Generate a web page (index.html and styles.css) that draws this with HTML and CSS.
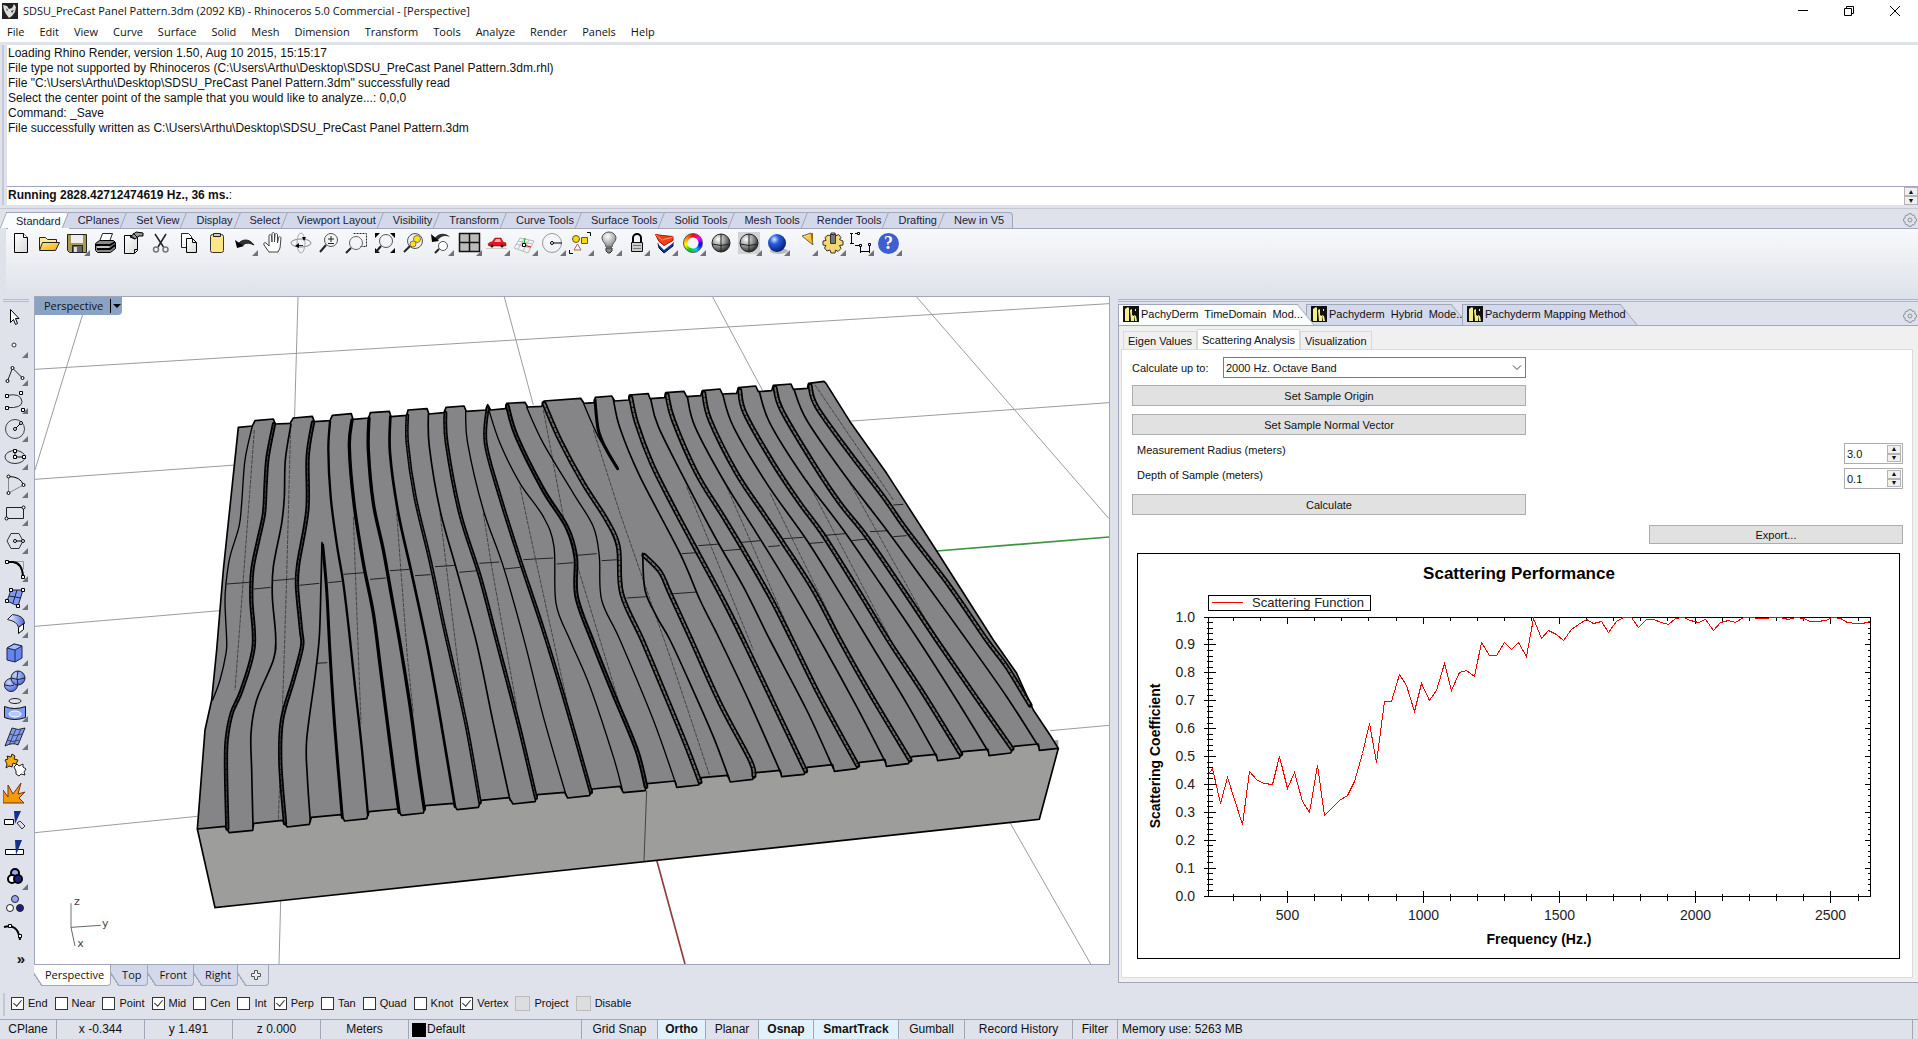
FILE: index.html
```html
<!DOCTYPE html>
<html lang="en">
<head>
<meta charset="utf-8">
<title>SDSU_PreCast Panel Pattern.3dm - Rhinoceros 5.0 Commercial</title>
<link rel="stylesheet" href="styles.css">
</head>
<body>
<svg class="defs" width="0" height="0" aria-hidden="true">
  <defs>
    <linearGradient id="gold" x1="0" y1="0" x2="1" y2="1"><stop offset="0" stop-color="#ffe98a"/><stop offset="1" stop-color="#f5a800"/></linearGradient>
    <linearGradient id="paper" x1="0" y1="0" x2="1" y2="1"><stop offset="0" stop-color="#fff"/><stop offset="1" stop-color="#d8d8d8"/></linearGradient>
    <radialGradient id="ballGray" cx=".35" cy=".3" r=".75"><stop offset="0" stop-color="#fff"/><stop offset=".5" stop-color="#999"/><stop offset="1" stop-color="#222"/></radialGradient>
    <radialGradient id="bulb" cx=".4" cy=".3" r=".8"><stop offset="0" stop-color="#fff"/><stop offset="1" stop-color="#777"/></radialGradient>
    <radialGradient id="ballBlue" cx=".35" cy=".3" r=".75"><stop offset="0" stop-color="#dfe9ff"/><stop offset=".35" stop-color="#2a5ee0"/><stop offset="1" stop-color="#001a70"/></radialGradient>
    <radialGradient id="ballSky" cx=".35" cy=".3" r=".8"><stop offset="0" stop-color="#c9d6ff"/><stop offset="1" stop-color="#3f62d8"/></radialGradient>
    <linearGradient id="arcFade" x1="0" y1="0" x2="1" y2="0"><stop offset="0" stop-color="#fff"/><stop offset="1" stop-color="#4a68e0"/></linearGradient>
    <symbol id="pachy" viewBox="0 0 16 16"><path d="M0 0h16v16H0z" fill="#111"/><path d="M2 3l3-2 1 1v13H2zM7 4l2-1v6l2 1v5H8zM11 9l2 1 1 5h-2zM12 3h1v2h-1z" fill="#f4ef86"/></symbol>
    <symbol id="gear" viewBox="0 0 16 16"><path d="M8 1.500l1.500.3.6 1.500 1.700-.3 1.200 1.200-.3 1.700 1.500.6.300 1.500-.3 1.500-1.500.6.3 1.700-1.200 1.200-1.700-.3-.6 1.500L8 14.500l-1.500-.3-.6-1.500-1.700.3L3 11.800l.3-1.700-1.500-.6L1.500 8l.3-1.500 1.500-.6L3 4.200 4.200 3l1.700.3.6-1.500z" fill="none" stroke="#8c929c"/><circle cx="8" cy="8" r="2" fill="none" stroke="#8c929c"/></symbol>
  </defs>
</svg>

<header class="titlebar">
  <svg class="app-icon" viewBox="0 0 16 16" aria-hidden="true"><path d="M0 0h16v16H0z" fill="#222"/><path d="M1 2l4 1 2 3 3-1 2-4 2 3-1 5-3 4-3 2-3-4-2-4z" fill="#ddd"/><path d="M4 5l2 2-1 1zM9 8l3-1-2 3z" fill="#333"/></svg>
  <h1 class="title">SDSU_PreCast Panel Pattern.3dm (2092 KB) - Rhinoceros 5.0 Commercial - [Perspective]</h1>
  <div class="window-buttons">
    <button type="button" aria-label="Minimize"><svg viewBox="0 0 12 12"><path d="M1 5.500h10" stroke="#000" fill="none"/></svg></button>
    <button type="button" aria-label="Restore"><svg viewBox="0 0 12 12"><path d="M1.500 3.500h7v7h-7zM3.500 3.500v-2h7v7h-2" stroke="#000" fill="none"/></svg></button>
    <button type="button" aria-label="Close"><svg viewBox="0 0 12 12"><path d="M1 1l10 10M11 1L1 11" stroke="#000" fill="none"/></svg></button>
  </div>
</header>

<nav class="menubar">
  <a href="#">File</a><a href="#">Edit</a><a href="#">View</a><a href="#">Curve</a><a href="#">Surface</a><a href="#">Solid</a><a href="#">Mesh</a><a href="#">Dimension</a><a href="#">Transform</a><a href="#">Tools</a><a href="#">Analyze</a><a href="#">Render</a><a href="#">Panels</a><a href="#">Help</a>
</nav>

<section class="command">
  <div class="history">
    <p>Loading Rhino Render, version 1.50, Aug 10 2015, 15:15:17</p>
    <p>File type not supported by Rhinoceros (C:\Users\Arthu\Desktop\SDSU_PreCast Panel Pattern.3dm.rhl)</p>
    <p>File "C:\Users\Arthu\Desktop\SDSU_PreCast Panel Pattern.3dm" successfully read</p>
    <p>Select the center point of the sample that you would like to analyze...: 0,0,0</p>
    <p>Command: _Save</p>
    <p>File successfully written as C:\Users\Arthu\Desktop\SDSU_PreCast Panel Pattern.3dm</p>
  </div>
  <div class="prompt">
    <p><b>Running 2828.42712474619 Hz., 36 ms.</b>:</p>
    <div class="stepper"><button type="button" aria-label="Previous command">▲</button><button type="button" aria-label="Next command">▼</button></div>
  </div>
</section>

<section class="toolbars">
  <div class="tab-row">
    <div class="tool-tabs">
      <button type="button" class="tab active">Standard</button><button type="button" class="tab">CPlanes</button><button type="button" class="tab">Set View</button><button type="button" class="tab">Display</button><button type="button" class="tab">Select</button><button type="button" class="tab">Viewport Layout</button><button type="button" class="tab">Visibility</button><button type="button" class="tab">Transform</button><button type="button" class="tab">Curve Tools</button><button type="button" class="tab">Surface Tools</button><button type="button" class="tab">Solid Tools</button><button type="button" class="tab">Mesh Tools</button><button type="button" class="tab">Render Tools</button><button type="button" class="tab">Drafting</button><button type="button" class="tab">New in V5</button>
    </div>
    <svg class="gear"><use href="#gear"/></svg>
  </div>
  <div class="tools">
    <button type="button" class="tool" aria-label="New"><svg viewBox="0 0 24 24"><path d="M5.500 2.500h9l4 4v15h-13z" fill="url(#paper)" stroke="#000"/><path d="M14.500 2.500v4h4" fill="#fff" stroke="#000"/></svg></button>
    <button type="button" class="tool" aria-label="Open"><svg viewBox="0 0 24 24"><path d="M2.500 18.500v-12h6l2 2h9v3" fill="#ffe9a0" stroke="#222"/><path d="M2.500 19.500l3-8h17l-4 8z" fill="url(#gold)" stroke="#222"/></svg></button>
    <button type="button" class="tool fly" aria-label="Save"><svg viewBox="0 0 24 24"><path d="M2.500 3.500h19v18h-17l-2-2z" fill="#a89a50" stroke="#222"/><path d="M6 4h12v8H6z" fill="#eee"/><path d="M7.500 14.500h10v7h-10z" fill="#666" stroke="#222"/><path d="M9 16h3v5H9z" fill="#ddd"/></svg></button>
    <button type="button" class="tool" aria-label="Print"><svg viewBox="0 0 24 24"><path d="M6.500 10.500l3-8h10l-3 8z" fill="#fff" stroke="#222"/><path d="M2.500 12.500l4-3h14l2 2v6l-5 4h-13l-2-2z" fill="#888" stroke="#000"/><path d="M3 14h14l5-3M4 18h13l5-4" stroke="#000" fill="none" stroke-width="2"/><path d="M4 16h12" stroke="#fff"/></svg></button>
    <button type="button" class="tool" aria-label="Document properties"><svg viewBox="0 0 24 24"><path d="M3.500 4.500h13v15l-3 3h-10z" fill="url(#paper)" stroke="#000"/><path d="M13.500 22v-3.500h3" fill="none" stroke="#000"/><path d="M9 6l6-5 7 1v3h-4l-4 3z" fill="#999" stroke="#000"/><path d="M9 4l5 4M12 2l4 4" stroke="#000"/></svg></button>
    <button type="button" class="tool" aria-label="Cut"><svg viewBox="0 0 24 24"><path d="M6 3l8.500 13M17 3L9 16" stroke="#222" stroke-width="1.500"/><circle cx="7" cy="18.500" r="2.500" fill="none" stroke="#777" stroke-width="1.500"/><circle cx="16.500" cy="18.500" r="2.500" fill="none" stroke="#777" stroke-width="1.500"/></svg></button>
    <button type="button" class="tool" aria-label="Copy"><svg viewBox="0 0 24 24"><path d="M4.500 2.500h7l3 3v11h-10z" fill="#fff" stroke="#222"/><path d="M9.500 7.500h6l4 4v10h-10z" fill="url(#paper)" stroke="#000"/><path d="M15.500 7.500v4h4" fill="none" stroke="#000"/></svg></button>
    <button type="button" class="tool" aria-label="Paste"><svg viewBox="0 0 24 24"><rect x="5.500" y="3.500" width="13" height="18" rx="2" fill="#fbe784" stroke="#333"/><path d="M8.500 5.500v-3h7v3z" fill="#ccc" stroke="#222"/></svg></button>
    <button type="button" class="tool fly" aria-label="Undo"><svg viewBox="0 0 24 24"><path d="M5 13c4-5 11-6 16 1-6-3-9-2-12 1z" fill="#333" stroke="#222"/><path d="M2 9l2 8 7-2z" fill="#000"/></svg></button>
    <button type="button" class="tool" aria-label="Pan"><svg viewBox="0 0 24 24"><path d="M8 21l-5-7c-1-2 1-3 2-2l3 3V5c0-2 2-2 2.500 0l.5 6V3c0-2 2.500-2 2.500 0v8l.5-7c0-2 2.500-2 2.500 0v8l1-5c0-2 2.500-1.500 2.500 0l-1 10-2 4z" fill="#fff" stroke="#444"/></svg></button>
    <button type="button" class="tool" aria-label="Rotate view"><svg viewBox="0 0 24 24"><ellipse cx="12" cy="12" rx="10" ry="4" fill="none" stroke="#888"/><ellipse cx="12" cy="12" rx="4" ry="10" fill="none" stroke="#aaa"/><path d="M6 15l4-3v5zM15 10l-2-4h4z" fill="#000"/><path d="M10 14.500h4" stroke="#222"/></svg></button>
    <button type="button" class="tool" aria-label="Zoom dynamic"><svg viewBox="0 0 24 24"><circle cx="14" cy="9" r="6.500" fill="#f4f4f4" stroke="#555"/><path d="M9 14l-6 7" stroke="#222" stroke-width="2"/><path d="M11 8h6M14 5v6M11 12.500h6" stroke="#222"/></svg></button>
    <button type="button" class="tool" aria-label="Zoom window"><svg viewBox="0 0 24 24"><path d="M8.500 2.500h13v13h-6" fill="none" stroke="#222" stroke-dasharray="2 1"/><circle cx="11" cy="12" r="6.500" fill="none" stroke="#666"/><path d="M6 17l-5 5" stroke="#222" stroke-width="2"/></svg></button>
    <button type="button" class="tool" aria-label="Zoom extents"><svg viewBox="0 0 24 24"><path d="M2 2h5L2 7zM22 2v5l-5-5zM22 22h-5l5-5zM2 22v-5l5 5z" fill="#000"/><circle cx="13" cy="10" r="6.500" fill="none" stroke="#555"/><path d="M8 15l-5 6" stroke="#222" stroke-width="2"/></svg></button>
    <button type="button" class="tool" aria-label="Zoom selected"><svg viewBox="0 0 24 24"><circle cx="14" cy="10" r="7.500" fill="#eee" stroke="#555"/><circle cx="16" cy="8" r="3.500" fill="#ffe600" stroke="#777"/><circle cx="12" cy="13" r="3" fill="#ffe600" stroke="#777"/><path d="M9 15l-6 6" stroke="#222" stroke-width="2"/></svg></button>
    <button type="button" class="tool fly" aria-label="Undo view"><svg viewBox="0 0 24 24"><path d="M5 8c4-6 11-7 16-2-5-2-9-1-12 3z" fill="#333"/><path d="M2 3l1 8 7-1z"/><circle cx="14" cy="15" r="4.500" fill="#fff" stroke="#555"/><path d="M10 18l-4 4" stroke="#222" stroke-width="2"/></svg></button>
    <button type="button" class="tool fly" aria-label="Four viewports"><svg viewBox="0 0 24 24"><path d="M2.500 2.500h20v18h-20z" fill="#bbb" stroke="#111" stroke-width="1.500"/><path d="M12.500 2.500v18M2.500 11.500h20" stroke="#111" stroke-width="1.500"/></svg></button>
    <button type="button" class="tool fly" aria-label="Set view"><svg viewBox="0 0 24 24"><path d="M3 14c0-2 2-3 4-3l3-4h6l2 4 3 1v3H4z" fill="#e01520" stroke="#800" stroke-width=".5"/><path d="M11 8h4l1 3H9z" fill="#f6b0b0"/><circle cx="7" cy="15" r="1.500" fill="#222"/><circle cx="17" cy="15" r="1.500" fill="#222"/><path d="M1 17.500h21" stroke="#ccc"/></svg></button>
    <button type="button" class="tool fly" aria-label="Construction plane"><svg viewBox="0 0 24 24"><path d="M7 7l14 3-6 12-14-5zM5 10l14 3M3 13l14 4M11 8L5 18M16 9l-6 11" fill="none" stroke="#bbb"/><path d="M11 14l1-7" stroke="#0a0"/><path d="M11 14l7 2" stroke="#c00"/><path d="M9.500 12.500h3v3h-3z" fill="#fff" stroke="#000"/></svg></button>
    <button type="button" class="tool fly" aria-label="Object snap"><svg viewBox="0 0 24 24"><circle cx="11" cy="12" r="9.500" fill="none" stroke="#999"/><path d="M12 12h9" stroke="#000"/><circle cx="11" cy="12" r="1.500" fill="#fff" stroke="#000"/></svg></button>
    <button type="button" class="tool fly" aria-label="Select"><svg viewBox="0 0 24 24"><circle cx="7" cy="8" r="3.500" fill="#ffd800" stroke="#555"/><path d="M12.500 6.500h6v6h-6z" fill="#ffd800" stroke="#555"/><path d="M5 19l3.500-6 3.500 6z" fill="#fff" stroke="#a64"/><path d="M18 1.500h3.500V5M.5 19v3.500H4" fill="none" stroke="#000"/></svg></button>
    <button type="button" class="tool fly" aria-label="Hide objects"><svg viewBox="0 0 24 24"><path d="M9 16c0-4-4-5-4-9a7 6 0 0 1 14 0c0 4-4 5-4 9z" fill="url(#bulb)" stroke="#555"/><path d="M9 17h6v3l-2 2h-2l-2-2z" fill="#888" stroke="#333"/></svg></button>
    <button type="button" class="tool fly" aria-label="Lock objects"><svg viewBox="0 0 24 24"><path d="M8 11V7a4 4 0 0 1 8 0v4" fill="none" stroke="#000" stroke-width="2"/><path d="M6.500 11.500h11v9h-11z" fill="#ccc" stroke="#111"/><path d="M8 14.500h8M8 17.500h8" stroke="#777"/></svg></button>
    <button type="button" class="tool fly" aria-label="Layers"><svg viewBox="0 0 24 24"><path d="M5 12l15-1v4l-9 7-5-5z" fill="#12309a" stroke="#001050"/><path d="M4 9l16-1v4l-9 7-5-5z" fill="#fff"/><path d="M2.500 3.500l7 1 10.500 1v4l-9 5-5-4z" fill="#f0401a" stroke="#b01000"/><path d="M3 4l6 5 11-3" fill="none" stroke="#ff9a60"/></svg></button>
    <button type="button" class="tool fly color-wheel" aria-label="Object properties"><i></i></button>
    <button type="button" class="tool" aria-label="Shade"><svg viewBox="0 0 24 24"><circle cx="12" cy="12" r="9" fill="url(#ballGray)" stroke="#222"/><path d="M12 3v18M3 13q9 3 18 0" fill="none" stroke="#222"/></svg></button>
    <button type="button" class="tool fly" aria-label="Shade selected"><svg viewBox="0 0 24 24"><path d="M1 1h22v22H1z" fill="#d0d2d6"/><circle cx="12" cy="12" r="9" fill="url(#ballGray)" stroke="#222"/><path d="M12 3v18M3 13q9 3 18 0" fill="none" stroke="#222"/></svg></button>
    <button type="button" class="tool fly" aria-label="Render"><svg viewBox="0 0 24 24"><ellipse cx="14" cy="20" rx="9" ry="3" fill="#bbb"/><circle cx="12" cy="12" r="9" fill="url(#ballBlue)"/></svg></button>
    <button type="button" class="tool fly" aria-label="Spotlight"><svg viewBox="0 0 24 24"><path d="M9 5l9-3 2 12z" fill="url(#gold)" stroke="#666"/><path d="M18 2h2v12z" fill="#a60"/></svg></button>
    <button type="button" class="tool fly" aria-label="Options"><svg viewBox="0 0 24 24"><path d="M10 2h4l.5 3 3-1.500 2.500 3-1.500 2 3.500 1.500v4l-3.500.5 1.500 3-3 3-2.500-1.500-.5 3h-4l-1-3-3 1-2.500-3 1.500-2.500L2 14v-4l3-.5-1-3L7 4l2.500 1z" fill="#f4d672" stroke="#333"/><path d="M9.500 3.500h5v9h-5z" fill="#777" stroke="#333"/></svg></button>
    <button type="button" class="tool fly" aria-label="Dimensions"><svg viewBox="0 0 24 24"><path d="M2.500 3v9M1 2.500h3M1 12.500h4M6 2.500h4M6 14.500h7M11.500 14v8M20.500 14v8M12 20.500h8" fill="none" stroke="#000"/><path d="M8.500 1.500h2v2h-2zM10.500 13.500h2v2h-2zM19.500 12.500h2v2h-2z" fill="#fff" stroke="#000"/></svg></button>
    <button type="button" class="tool fly help" aria-label="Help"><i>?</i></button>
  </div>
</section>

<main class="workspace">
  <aside class="sidebar">
    <button type="button" class="tool" aria-label="Select objects"><svg viewBox="0 0 24 24"><path d="M7.500 4.500v13l3-3 2 5 2-1-2-5h3.500z" fill="#fff" stroke="#000"/></svg></button>
    <button type="button" class="tool fly" aria-label="Point"><svg viewBox="0 0 24 24"><circle cx="11" cy="12" r="2" fill="#fff" stroke="#333"/></svg></button>
    <button type="button" class="tool fly" aria-label="Polyline"><svg viewBox="0 0 24 24"><path d="M4.500 20l5-13 10 10" fill="none" stroke="#222"/><g fill="#fff" stroke="#000"><circle cx="4.500" cy="20" r="1.500"/><circle cx="9.500" cy="7" r="1.500"/><circle cx="19.500" cy="17" r="1.500"/></g></svg></button>
    <button type="button" class="tool fly" aria-label="Curve"><svg viewBox="0 0 24 24"><path d="M4 6.500q14-3 15 6 0 7-15 6" fill="none" stroke="#333"/><path d="M2.500 5.500h3v3h-3zM16.500 2.500h3v3h-3zM2.500 17.500h3v3h-3zM18.500 19.500h3v3h-3z" fill="#fff" stroke="#000"/></svg></button>
    <button type="button" class="tool fly" aria-label="Circle"><svg viewBox="0 0 24 24"><circle cx="12" cy="12" r="9.500" fill="none" stroke="#444"/><path d="M12 12l6-6" stroke="#000"/><circle cx="12" cy="12" r="1.500" fill="#fff" stroke="#000"/><circle cx="18" cy="6" r="1.500" fill="#fff" stroke="#000"/></svg></button>
    <button type="button" class="tool fly" aria-label="Ellipse"><svg viewBox="0 0 24 24"><ellipse cx="12" cy="12" rx="10" ry="6.500" fill="none" stroke="#333"/><path d="M12 6v6h9" fill="none" stroke="#000"/><path d="M10.500 4.500h3v3h-3zM10.500 10.500h3v3h-3zM19.500 10.500h3v3h-3z" fill="#fff" stroke="#000"/></svg></button>
    <button type="button" class="tool fly" aria-label="Arc"><svg viewBox="0 0 24 24"><path d="M5.500 20V3.500" stroke="#888"/><path d="M5.500 20l15-8" stroke="#888"/><path d="M5.500 3.500q12 0 15 8.500" fill="none" stroke="#000"/><g fill="#fff" stroke="#000"><circle cx="5.500" cy="20" r="1.500"/><circle cx="5.500" cy="3.500" r="1.500"/><circle cx="20.500" cy="12" r="1.500"/></g></svg></button>
    <button type="button" class="tool fly" aria-label="Rectangle"><svg viewBox="0 0 24 24"><path d="M3.500 6.500h17v11h-17z" fill="none" stroke="#222"/><circle cx="3.500" cy="17.500" r="1.500" fill="#fff" stroke="#000"/><circle cx="20.500" cy="6.500" r="1.500" fill="#fff" stroke="#000"/></svg></button>
    <button type="button" class="tool fly" aria-label="Polygon"><svg viewBox="0 0 24 24"><path d="M4 12l4-7.500h8l4 7.500-4 7.500H8z" fill="none" stroke="#333"/><path d="M12 12h8" stroke="#000"/><circle cx="12" cy="12" r="1.500" fill="#fff" stroke="#000"/><circle cx="20" cy="12" r="1.500" fill="#fff" stroke="#000"/></svg></button>
    <button type="button" class="tool fly" aria-label="Fillet curves"><svg viewBox="0 0 24 24"><path d="M12 4.500h8.500v8" fill="none" stroke="#999"/><path d="M4 5h6q9 1 10 14" fill="none" stroke="#000" stroke-width="2"/><path d="M2.500 3.500h3v3h-3zM18.500 18.500h3v3h-3z" fill="#fff" stroke="#000"/></svg></button>
    <button type="button" class="tool fly" aria-label="Surface from points"><svg viewBox="0 0 24 24"><path d="M8 5h12l-5 16-11-5z" fill="#7f9af5" stroke="#223"/><path d="M14 5l-4 13M6 11l12 2" stroke="#223" fill="none"/><path d="M6.500 3.500h3v3h-3zM18.500 3.500h3v3h-3zM2.500 14.500h3v3h-3zM13.500 19.500h3v3h-3z" fill="#fff" stroke="#000"/></svg></button>
    <button type="button" class="tool fly" aria-label="Extrude surface"><svg viewBox="0 0 24 24"><path d="M4.500 6.500l5-5q12 1 12 9l-6 4q-1-6-11-8z" fill="url(#arcFade)" stroke="#222"/><path d="M15.500 14.500l5-4v6l-5 4z" fill="#fff" stroke="#000"/></svg></button>
    <button type="button" class="tool fly" aria-label="Box"><svg viewBox="0 0 24 24"><path d="M4 7l7-4 8 2v12l-7 4-8-2z" fill="#6684f0" stroke="#1a2550"/><path d="M4 7l8 2 7-4-8-2z" fill="#a9bcff" stroke="#1a2550"/><path d="M12 9v12" stroke="#1a2550"/></svg></button>
    <button type="button" class="tool fly" aria-label="Boolean union"><svg viewBox="0 0 24 24"><circle cx="8" cy="16" r="6.500" fill="url(#ballSky)" stroke="#223"/><circle cx="15" cy="9" r="7" fill="url(#ballSky)" stroke="#223"/><path d="M8 9q7 3 14 0M15 2q-2 7 0 14M2 16q6 2 9 0" fill="none" stroke="#223"/></svg></button>
    <button type="button" class="tool fly" aria-label="Project curve"><svg viewBox="0 0 24 24"><ellipse cx="12" cy="4" rx="6" ry="2.500" fill="none" stroke="#222"/><path d="M1.500 9.500q10 4 21 0v11q-11 4-21 0z" fill="#7f9cf5" stroke="#111"/><ellipse cx="12" cy="17" rx="6" ry="3" fill="#b9c9ff" stroke="#fff"/></svg></button>
    <button type="button" class="tool fly" aria-label="Mesh"><svg viewBox="0 0 24 24"><path d="M9 3q6 3 13 0l-7 17q-5-3-13 1z" fill="#7f9af5" stroke="#223"/><path d="M13 4L6 20M18 4l-7 15M6 9q6 3 13 0M4 15q6 3 12 0" fill="none" stroke="#445"/></svg></button>
    <button type="button" class="tool" aria-label="Join"><svg viewBox="0 0 24 24"><path d="M2 7l3-1-1-3 4 1 1-3 3 2-1 3 4 1-2 4-3-1-1 4-3-1-3 2 1-4z" fill="#ffa90a" stroke="#222"/><path d="M11 14l3-3 2 2 4-2 0 3 3 2-2 3 1 3-4-1-2 2-3-2 0-3z" fill="#fff" stroke="#222"/></svg></button>
    <button type="button" class="tool" aria-label="Explode"><svg viewBox="0 0 24 24"><path d="M0 9l5 7 0-12 5 9 8-11-3 11 7-2-6 6 5 5H0z" fill="#f49a05" stroke="#732"/></svg></button>
    <button type="button" class="tool" aria-label="Trim"><svg viewBox="0 0 24 24"><path d="M1.500 10.500h9v5h-9z" fill="#fff" stroke="#000"/><path d="M14 14l3-2 5 5-3 3z" fill="none" stroke="#333"/><path d="M11 2h7l-6 13z" fill="#14308c"/></svg></button>
    <button type="button" class="tool" aria-label="Split"><svg viewBox="0 0 24 24"><path d="M2.500 12.500h18v5h-18z" fill="#fff" stroke="#000"/><path d="M12 3h7l-6 15z" fill="#14308c"/></svg></button>
    <button type="button" class="tool fly" aria-label="Group"><svg viewBox="0 0 24 24"><g stroke="#000" stroke-width="2"><circle cx="12" cy="8" r="4" fill="#9aa6f0"/><circle cx="9" cy="14" r="4" fill="#fff"/><circle cx="15" cy="14" r="4" fill="#1c1f80"/></g></svg></button>
    <button type="button" class="tool" aria-label="Ungroup"><svg viewBox="0 0 24 24"><g stroke="#222"><circle cx="12" cy="6" r="3.500" fill="#9aa6f0"/><circle cx="7" cy="15" r="3.500" fill="#fff"/><circle cx="17" cy="15" r="3.500" fill="#1c1f80"/></g></svg></button>
    <button type="button" class="tool" aria-label="Edit points"><svg viewBox="0 0 24 24"><path d="M1 6q14-4 16 13" fill="none" stroke="#000" stroke-width="2"/><path d="M5.500 3.500h3v3h-3zM15.500 13.500h3v3h-3z" fill="#fff" stroke="#000"/></svg></button>
    <button type="button" class="tool more" aria-label="More tools">»</button>
  </aside>

  <section class="view">
    <div class="viewport">
      <svg id="scene" class="scene" viewBox="-465 -219 3222 2001" preserveAspectRatio="xMidYMid slice" role="img" aria-label="Perspective view of the precast panel">
        <g class="grid">
          <path d="M-465-2L2757-199M-465 328L2757 98M-465 769L90 722M-465 1388L22 1339M2580 1082L2757 1066M-306-219L-465 300M324-219L272 1595L267 1782M943-219L1030 105M1568-219L1718 62M2180-219L2757 446M2460 1358L2702 1782"/>
          <path class="axis-y" d="M2240 543L2757 501"/>
          <path class="axis-x" d="M1400 1470L1485 1782"/>
        </g>
        <g class="slab">
          <path class="front" d="M22 1360L2605 1110 2605 1135 2548 1348 75 1613 22 1377z"/>
          <path class="top" d="M145 172L187 168 195 152 250 147 256 162 300 160 310 144 367 139 373 155 420 152 427 136 484 131 489 148 536 144 541 128 598 124 603 140 650 136 654 120 711 116 717 132 762 128 768 112 822 108 829 124 888 120 893 104 902 120 946 116 950 100 1005 97 1013 111 1055 109 1062 93 1172 85 1182 100 1212 98 1216 82 1265 78 1274 93 1316 90 1318 75 1375 71 1380 86 1424 83 1427 68 1482 64 1490 80 1532 77 1537 62 1590 57 1597 72 1640 70 1645 53 1697 48 1705 65 1745 62 1750 46 1803 42 1810 58 1852 55 1856 40 1902 34 1908 40 1980 155 2090 310 2135 380 2240 543 2410 810 2480 910 2530 1020 2580 1095 2605 1135 2548 1141 2545 1122 2472 1129 2462 1149 2397 1157 2394 1138 2318 1145 2308 1164 2243 1172 2238 1153 2166 1160 2155 1181 2089 1189 2085 1169 2009 1177 1999 1196 1933 1204 1928 1184 1852 1192 1842 1213 1775 1220 1770 1201 1698 1208 1688 1228 1621 1236 1613 1216 1535 1223 1526 1245 1460 1252 1455 1233 1372 1241 1365 1262 1300 1268 1290 1249 1208 1257 1198 1277 1133 1284 1124 1267 1042 1274 1035 1295 969 1302 957 1283 873 1291 865 1312 801 1319 790 1300 706 1307 700 1329 634 1336 622 1317 537 1325 530 1346 464 1353 453 1334 364 1342 358 1363 292 1371 277 1351 191 1360 188 1381 118 1388 105 1369 22 1377 45 1080 65 990 80 840 100 600z"/>
          <path class="edge" d="M22 1377L75 1613 2548 1348 2605 1135"/>
          <path class="seam" d="M1370 1262L1362 1473"/>
        </g>
        <path class="iso" d="M110 642L177 637M192 657L242 652M248 632L317 626M328 646L388 640M415 638L455 634M460 613L522 608M540 628L588 624M600 602L658 598M675 617L722 614M735 590L797 586M808 607L862 602M868 580L928 576M942 597L990 592M1000 569L1090 564M1100 582L1150 578M1162 556L1220 551M1235 572L1285 569M1310 684L1370 680M1440 672L1520 666M1475 551L1520 548M1525 527L1590 522M1600 542L1650 538M1655 517L1710 512M1735 530L1770 527M1780 506L1840 502M1860 520L1900 517M1905 496L1965 491M1985 512L2030 507M2040 485L2095 482M2110 500L2150 497M2110 405L2140 403M380 880L412 878"/>
        <path class="iso dotted" d="M193 180L165 560 135 960M302 165L290 620 280 940 265 1350M490 440L505 850 513 1060M620 430L652 860 670 1030M750 430L800 850 825 1040M880 430L905 590 980 1010M990 350L1035 560 1130 990M1060 120L1120 440 1160 580 1300 1040M1210 180L1290 430 1440 860 1560 1220M1490 350L1690 840M1610 350L1850 900M1740 370L2000 900M1850 330L2150 900M1980 340L2280 880M1875 45L2110 390"/>
        <g id="ribs"></g>
        <g class="gizmo">
          <path class="z" d="M-357 1600V1672"/><path d="M-357 1672L-268 1666M-357 1672L-345 1728"/>
          <text x="-348" y="1604">z</text><text x="-264" y="1672">y</text><text x="-338" y="1730">x</text>
        </g>
      </svg>
      <button type="button" class="view-title"><span>Perspective</span><i></i></button>
    </div>
    <div class="view-tabs">
      <button type="button" class="vtab active">Perspective</button><button type="button" class="vtab">Top</button><button type="button" class="vtab">Front</button><button type="button" class="vtab">Right</button><button type="button" class="vtab add" aria-label="New viewport"><svg viewBox="0 0 10 10"><path d="M3.500.5h3v3h3v3h-3v3h-3v-3h-3v-3h3z" fill="#eee" stroke="#555"/></svg></button>
    </div>
  </section>

  <section class="panel">
    <div class="panel-tabs">
      <button type="button" class="ptab active"><svg><use href="#pachy"/></svg>PachyDerm&nbsp; TimeDomain&nbsp; Mod...</button>
      <button type="button" class="ptab"><svg><use href="#pachy"/></svg>Pachyderm&nbsp; Hybrid&nbsp; Mode...</button>
      <button type="button" class="ptab"><svg><use href="#pachy"/></svg>Pachyderm Mapping Method</button>
      <svg class="gear"><use href="#gear"/></svg>
    </div>
    <div class="panel-body">
      <div class="page-tabs">
        <button type="button">Eigen Values</button><button type="button" class="active">Scattering Analysis</button><button type="button">Visualization</button>
      </div>
      <div class="page">
        <div class="row">
          <label for="band">Calculate up to:</label>
          <span class="select"><select id="band"><option>2000 Hz. Octave Band</option></select><svg viewBox="0 0 10 6"><path d="M1 .5l4 4 4-4" fill="none" stroke="#444"/></svg></span>
        </div>
        <button type="button" class="btn">Set Sample Origin</button>
        <button type="button" class="btn">Set Sample Normal Vector</button>
        <div class="field"><label for="radius">Measurement Radius (meters)</label><span class="spin"><input id="radius" type="text" value="3.0"><span class="stepper"><button type="button" aria-label="Increase radius">▲</button><button type="button" aria-label="Decrease radius">▼</button></span></span></div>
        <div class="field"><label for="depth">Depth of Sample (meters)</label><span class="spin"><input id="depth" type="text" value="0.1"><span class="stepper"><button type="button" aria-label="Increase depth">▲</button><button type="button" aria-label="Decrease depth">▼</button></span></span></div>
        <button type="button" class="btn">Calculate</button>
        <button type="button" class="btn export">Export...</button>
        <div class="chart">
          <svg id="chart" viewBox="1 1 761 404" role="img" aria-label="Scattering Performance">
            <text class="chart-title" x="382" y="26">Scattering Performance</text>
            <rect class="line" x="71.500" y="42.500" width="162" height="15"/>
            <path class="series" d="M75 49.500H106"/>
            <text class="legend" x="115" y="54">Scattering Function</text>
            <text class="axis-title" x="402" y="391">Frequency (Hz.)</text>
            <text class="axis-title" transform="translate(23 203) rotate(-90)">Scattering Coefficient</text>
          </svg>
        </div>
      </div>
    </div>
  </section>
</main>

<form class="osnap">
  <label><input type="checkbox" checked>End</label><label><input type="checkbox">Near</label><label><input type="checkbox">Point</label><label><input type="checkbox" checked>Mid</label><label><input type="checkbox">Cen</label><label><input type="checkbox">Int</label><label><input type="checkbox" checked>Perp</label><label><input type="checkbox">Tan</label><label><input type="checkbox">Quad</label><label><input type="checkbox">Knot</label><label><input type="checkbox" checked>Vertex</label><label><input type="checkbox" disabled>Project</label><label><input type="checkbox" disabled>Disable</label>
</form>

<footer class="status">
  <button type="button" class="w56">CPlane</button><span class="w88">x -0.344</span><span class="w88">y 1.491</span><span class="w88">z 0.000</span><span class="w88">Meters</span><button type="button" class="layer"><i></i>Default</button><button type="button" class="w76">Grid Snap</button><button type="button" class="on w48">Ortho</button><button type="button" class="w53">Planar</button><button type="button" class="on w54">Osnap</button><button type="button" class="on w85">SmartTrack</button><button type="button" class="w66">Gumball</button><button type="button" class="w109">Record History</button><button type="button" class="w45">Filter</button><span class="memory">Memory use: 5263 MB</span>
</footer>
<script src="scene.js"></script>
</body>
</html>
```
FILE: styles.css
```css
*, *::before, *::after { box-sizing: border-box; }
:root {
  --chrome: #dfe2ea;
  --tab: #d3d9ea;
  --edge: #a0a7b8;
  --ui: "Open Sans", "Noto Sans", sans-serif;
  --small: "Liberation Sans", Arial, sans-serif;
}
body {
  margin: 0;
  min-height: 100vh;
  display: flex;
  flex-direction: column;
  background: var(--chrome);
  color: #111;
  font: 11px/16px var(--small);
}
p, h1 { margin: 0; }
button, input, select { font: inherit; color: inherit; padding: 0; margin: 0; border: 0; background: none; border-radius: 0; white-space: nowrap; }
i { font-style: normal; }
.defs { position: absolute; }

.titlebar { display: flex; align-items: center; height: 22px; padding-left: 2px; gap: 5px; background: #fff; }
.app-icon { width: 16px; height: 16px; }
.title { flex: 1; font: 11px/20px var(--ui); }
.window-buttons { display: flex; align-items: center; }
.window-buttons button { width: 46px; height: 20px; line-height: 0; }
.window-buttons svg { width: 12px; height: 12px; }

.menubar { display: flex; height: 20px; background: #fff; font: 11px/20px var(--ui); }
.menubar a { padding: 0 8px 0 7px; color: #111; text-decoration: none; }

.command { margin: 3px 0 0 2px; padding-left: 3px; border-left: 2px solid #c3c8d4; font: 12px/15px var(--small); }
.history { height: 142px; padding: 1px 1px 0; background: #fff; border-bottom: 1px solid var(--edge); }
.prompt { display: flex; justify-content: space-between; height: 18px; padding-left: 1px; line-height: 17px; background: #fff; }
.stepper { display: flex; flex-direction: column; width: 14px; }
.stepper button { flex: 1; border: 1px solid #b4b4b4; background: #f0f0f0; font-size: 7px; line-height: 6px; text-align: center; }

.toolbars { margin-top: 3px; padding: 3px 0 0 6px; border-top: 1px solid #c3c8d4; height: 88px; }
.tab-row { display: flex; justify-content: space-between; border-bottom: 1px solid var(--edge); height: 17px; padding-left: 2px; }
.tool-tabs { display: flex; }
.tab { position: relative; height: 16px; padding: 0 8px; line-height: 15px; border-top: 1px solid var(--edge); border-right: 1px solid var(--edge); border-radius: 0 4px 0 0; background: var(--tab); color: #223; }
.tab::before { content: ""; position: absolute; left: -5px; top: -1px; width: 9px; height: 16px; background: inherit; border: 1px solid var(--edge); border-width: 1px 0 0 1px; transform: skewX(-22deg); }
.tab.active { background: #fbfcfd; height: 17px; }
.gear { width: 16px; height: 16px; }
.tools { display: flex; height: 66px; padding-left: 1px; background: linear-gradient(#f8f9fb, #dfe2ea); }
.tool { position: relative; width: 28px; height: 28px; padding: 2px; flex: none; line-height: 0; }
.tool svg { width: 24px; height: 24px; }
.fly::after { content: ""; position: absolute; right: 1px; bottom: 1px; border: 3px solid #6f7278; border-left-color: transparent; border-top-color: transparent; }
.color-wheel i { display: block; width: 20px; height: 20px; margin: 2px; border-radius: 50%; background: radial-gradient(#f4f5f7 5px, transparent 6px), conic-gradient(red, #f0f, #00f, #0cf, #0c0, #ff0, #f80, red); border: 1px solid #555; }
.help i { display: block; width: 21px; height: 21px; margin: 1px; border-radius: 50%; background: #3d5fd0; color: #fff; font: bold 18px/21px "Liberation Serif", serif; }

.workspace { flex: 1; display: grid; grid-template-columns: 34px minmax(0, 1076fr) minmax(0, 808fr); }
.sidebar { display: flex; flex-direction: column; margin: 3px 5px 0 1px; }
.sidebar::before { content: ""; height: 3px; margin: 0 0 1px 2px; border: solid #b8bdca; border-width: 1px 0; }
.more { font: bold 15px/24px var(--small); padding: 0 0 6px 12px; }
.view { display: flex; flex-direction: column; }
.viewport { position: relative; flex: 1; border: 1px solid var(--edge); background: #fff; overflow: hidden; }
.scene { position: absolute; inset: 0; width: 100%; height: 100%; }
.view-title { position: absolute; left: 0; top: 0; display: flex; align-items: center; width: 87px; height: 18px; padding-left: 9px; background: #8ba3c3; font: 11px/18px var(--ui); border-radius: 0 0 4px 0; }
.view-title span { width: 67px; text-align: left; border-right: 1px solid #000; line-height: 14px; }
.view-title i { margin-left: 2px; border: 4px solid transparent; border-top-color: #000; border-bottom-width: 0; }
.grid path { fill: none; stroke: #9a9ca4; stroke-width: 3; }
.grid .axis-y { stroke: #3c9440; stroke-width: 5; }
.grid .axis-x { stroke: #8e3d3d; stroke-width: 5; }
.front { fill: #9d9d9c; }
.top { fill: #858588; stroke: #000; stroke-width: 5; stroke-linejoin: round; }
.edge { fill: none; stroke: #000; stroke-width: 5; }
.seam { stroke: #444; stroke-width: 3; }
.iso { fill: none; stroke: #222; stroke-width: 3; }
.dotted { stroke-width: 2; stroke-dasharray: 12 3; }
.rib { fill: none; stroke: #000; stroke-linecap: round; }
.rib-fill { fill: none; stroke: #6c6d69; stroke-dasharray: 14 2; }
.gizmo path { stroke: #666; stroke-width: 3; }
.gizmo .z { stroke: #aaa; stroke-width: 5; }
.gizmo text { font: 33px "DejaVu Sans", sans-serif; fill: #444; }

.view-tabs { display: flex; height: 22px; }
.vtab { position: relative; height: 21px; padding: 0 6px 0 11px; font: 11px/20px var(--ui); background: var(--tab); border: solid var(--edge); border-width: 0 1px 1px 0; border-radius: 0 0 4px 0; }
.vtab::before { content: ""; position: absolute; left: 0; bottom: -1px; width: 13px; height: 20px; background: linear-gradient(57deg, var(--chrome) 6px, var(--edge) 6px, var(--edge) 7px, transparent 8px); }
.vtab.active { background: #fff; }
.vtab.add { width: 31px; background: var(--chrome); line-height: 0; }
.vtab.add svg { width: 10px; height: 10px; }

.panel { margin: 3px 0 4px 8px; display: flex; flex-direction: column; }
.panel::before { content: ""; height: 3px; flex: none; border: solid #b0b6c4; border-width: 1px 0; }
.panel-tabs { display: flex; margin-top: 2px; height: 21px; }
.ptab { position: relative; isolation: isolate; display: flex; align-items: center; gap: 2px; flex: none; height: 21px; width: 180px; margin-right: 8px; padding: 0 0 2px 4px; background: var(--tab); border: solid var(--edge); border-width: 1px 0 0 1px; }
.ptab::after { content: ""; position: absolute; z-index: -1; right: -8px; top: -1px; width: 24px; height: 21px; background: inherit; border: solid var(--edge); border-width: 1px 1px 0 0; transform: skewX(39deg); }
.ptab:nth-child(2) { width: 146px; margin-right: 10px; }
.ptab:nth-child(3) { width: 159px; }
.ptab.active { z-index: 1; background: #fbfcfd; }
.ptab svg { width: 16px; height: 16px; flex: none; }
.panel-tabs .gear { margin: 4px 0 0 auto; }
.panel-body { flex: 1; display: flex; flex-direction: column; border: solid var(--edge); border-width: 1px 0 1px 1px; background: #f0f0f0; padding: 3px 5px 4px 2px; }
.page-tabs { display: flex; align-items: flex-end; padding-left: 2px; height: 20px; }
.page-tabs button { height: 18px; padding: 0 4px; border: 1px solid #d9d9d9; border-bottom: 0; }
.page-tabs .active { height: 20px; background: #fff; }
.page { flex: 1; display: flex; flex-direction: column; background: #fff; border: 1px solid #dcdcdc; padding: 7px 9px 18px 10px; }
.row { display: flex; align-items: center; height: 21px; margin-bottom: 7px; }
.row label { width: 91px; }
.select { position: relative; width: 303px; height: 21px; border: 1px solid #7a7a7a; }
.select select { width: 100%; height: 100%; padding-left: 2px; appearance: none; }
.select svg { position: absolute; right: 3px; top: 7px; width: 10px; height: 6px; pointer-events: none; }
.btn { width: 394px; height: 21px; flex: none; margin-bottom: 8px; background: #e1e1e1; border: 1px solid #adadad; }
.field { display: flex; justify-content: space-between; height: 25px; padding-left: 5px; }
.field label { line-height: 14px; }
.spin { display: flex; width: 59px; height: 21px; padding: 1px; border: 1px solid #abadb3; background: #fff; }
.spin input { flex: 1; min-width: 0; padding-left: 1px; }
.field + .btn { margin: 1px 0 10px; }
.btn.export { align-self: flex-end; width: 254px; height: 19px; margin-bottom: 9px; }
.chart { margin: 0 3px 0 5px; border: 1px solid #000; }
.chart svg { display: block; width: 100%; height: auto; }
.chart text { font: 14px var(--small); text-anchor: middle; fill: #222; }
.chart .chart-title { font-size: 17px; font-weight: bold; fill: #000; }
.chart .axis-title { font-weight: bold; fill: #000; }
.chart .legend { text-anchor: start; font-size: 13px; }
.chart .ylabel { text-anchor: end; }
.line { fill: none; stroke: #000; shape-rendering: crispEdges; }
.series { fill: none; stroke: #f00; shape-rendering: crispEdges; }

.osnap { display: flex; align-items: center; gap: 7px; height: 23px; margin: 6px 0 3px 3px; padding: 0 0 3px 6px; border-left: 2px solid #c3c8d4; }
.osnap label { display: flex; align-items: center; gap: 4px; }
.osnap input { appearance: none; position: relative; width: 13px; height: 13px; border: 1px solid #333; background: #fff; }
.osnap input:checked::after { content: ""; position: absolute; left: 3px; top: 0; width: 5px; height: 8px; border: solid #333; border-width: 0 1px 1px 0; transform: rotate(40deg); }
.osnap input:disabled { width: 15px; height: 15px; border-color: #bbb; background: #dcdddf; }

.status { display: flex; height: 20px; border-top: 1px solid var(--edge); font: 12px/19px var(--small); }
.status > * { border-right: 1px solid var(--edge); text-align: center; height: 19px; flex: none; white-space: nowrap; }
.status .layer { display: flex; align-items: center; gap: 1px; width: 173px; padding-left: 3px; }
.layer i { width: 14px; height: 14px; background: #000; }
.status .on { background: #e2f2fc; font-weight: bold; }
.status .memory { flex: 1; margin-right: 5px; padding-left: 4px; text-align: left; }
.w45 { width: 45px; } .w48 { width: 48px; } .w53 { width: 53px; } .w54 { width: 55px; } .w56 { width: 57px; }
.w66 { width: 66px; } .w76 { width: 76px; } .w85 { width: 85px; } .w88 { width: 88px; } .w109 { width: 108px; }
```
FILE: scene.js
```js
const NS = 'http://www.w3.org/2000/svg';
function add(parent, tag, attrs, text) {
  const el = document.createElementNS(NS, tag);
  for (const k in attrs) el.setAttribute(k, attrs[k]);
  if (text) el.textContent = text;
  parent.appendChild(el);
}

// Smooth path through a flat list of x,y pairs.
function spline(flat) {
  const p = [];
  for (let i = 0; i < flat.length; i += 2) p.push([flat[i], flat[i + 1]]);
  let d = `M${p[0]}`;
  for (let i = 0; i < p.length - 1; i++) {
    const a = p[i - 1] || p[i], b = p[i], c = p[i + 1], e = p[i + 2] || c;
    d += `C${b[0] + (c[0] - a[0]) / 6} ${b[1] + (c[1] - a[1]) / 6} ${c[0] - (e[0] - b[0]) / 6} ${c[1] - (e[1] - b[1]) / 6} ${c}`;
  }
  return d;
}

// Rib edges: stroke width, then the points from the back of the panel to the front.
const ribs = [
  [4, 187,168, 165,270, 155,400, 147,470, 120,560, 108,640, 105,700, 110,810, 108,850, 90,930, 68,990],
  [13, 252,162, 233,260, 227,340, 222,430, 205,510, 187,600, 184,690, 191,830, 155,960, 125,1030, 110,1110, 108,1200, 112,1376],
  [5, 303,162, 286,270, 283,380, 275,460, 250,590, 247,680, 257,800, 250,870, 200,990, 183,1090, 185,1200, 189,1370],
  [13, 369,157, 353,260, 352,420, 325,580, 321,650, 333,780, 336,830, 310,930, 276,1050, 271,1180, 285,1360],
  [5, 396,518, 393,640, 388,800, 375,920, 350,1110, 352,1220, 361,1355],
  [9, 398,525, 410,660, 420,850, 435,1080, 457,1343],
  [7, 420,155, 415,240, 422,380, 440,520, 460,640, 478,790, 495,950, 515,1130, 534,1335],
  [10, 486,150, 478,230, 492,400, 520,580, 550,730, 572,900, 600,1120, 627,1327],
  [10, 537,144, 535,240, 550,400, 580,540, 605,680, 630,820, 662,1020, 683,1180, 703,1318],
  [8, 601,140, 600,250, 625,430, 665,610, 710,820, 750,1040, 795,1310],
  [11, 652,136, 652,220, 675,380, 720,570, 760,760, 785,870, 830,1070, 870,1298],
  [5, 715,132, 718,230, 750,420, 800,600, 860,820, 910,1060, 960,1290],
  [12, 766,128, 770,220, 810,430, 870,620, 920,810, 985,1060, 1038,1284],
  [4, 827,124, 833,220, 880,420, 940,590, 1005,820, 1060,1040, 1128,1275],
  [12, 893,112, 887,220, 930,380, 990,570, 1060,780, 1130,1010, 1203,1267],
  [4, 893,108, 930,220, 990,340, 1060,440, 1092,530, 1098,700, 1140,810, 1200,950, 1270,1160, 1297,1260],
  [14, 952,107, 980,200, 1060,360, 1130,470, 1157,560, 1160,680, 1210,820, 1270,970, 1340,1140, 1368,1250],
  [4, 1010,112, 1060,220, 1150,370, 1210,470, 1228,560, 1235,690, 1290,810, 1390,1050, 1458,1243],
  [15, 1062,100, 1110,210, 1180,340, 1250,450, 1285,530, 1295,670, 1357,810, 1420,960, 1490,1130, 1530,1236],
  [4, 1178,94, 1225,200, 1283,296],
  [9, 1215,90, 1225,180, 1250,240, 1283,296],
  [5, 1270,88, 1290,175, 1350,320, 1470,550, 1530,690, 1590,810, 1680,1000, 1773,1210],
  [5, 1358,550, 1365,660, 1400,740, 1440,810, 1500,940, 1570,1100, 1617,1225],
  [15, 1362,556, 1410,605, 1440,670, 1504,810, 1590,1000, 1680,1170, 1692,1218],
  [15, 1322,82, 1340,160, 1385,280, 1450,410, 1530,560, 1600,690, 1660,810, 1760,1020, 1847,1203],
  [5, 1382,86, 1405,170, 1490,340, 1580,510, 1660,650, 1740,810, 1850,1020, 1930,1195],
  [15, 1431,74, 1450,150, 1520,310, 1600,440, 1660,540, 1740,680, 1806,810, 1890,980, 2003,1187],
  [5, 1492,80, 1515,170, 1600,330, 1700,490, 1780,620, 1890,810, 2000,1010, 2087,1178],
  [15, 1541,68, 1560,150, 1640,310, 1720,430, 1780,520, 1870,660, 1950,810, 2040,970, 2160,1170],
  [5, 1598,73, 1630,170, 1730,340, 1850,510, 1950,670, 2035,810, 2150,1000, 2240,1160],
  [15, 1649,60, 1665,130, 1750,280, 1830,400, 1900,495, 2010,670, 2095,810, 2200,970, 2312,1152],
  [5, 1708,65, 1740,160, 1840,320, 1960,480, 2070,640, 2185,810, 2300,990, 2395,1145],
  [15, 1755,52, 1775,120, 1870,280, 1950,400, 2030,500, 2140,660, 2240,810, 2350,970, 2466,1136],
  [5, 1812,58, 1850,150, 1960,310, 2090,480, 2200,630, 2330,810, 2450,980, 2546,1130],
  [15, 1860,46, 1880,110, 1980,250, 2080,380, 2150,480, 2280,650, 2390,810, 2450,890, 2520,1005]
];
const ribLayer = document.getElementById('ribs');
for (const [width, ...points] of ribs) {
  const d = spline(points);
  add(ribLayer, 'path', { class: 'rib', d, 'stroke-width': width });
  if (width > 10) add(ribLayer, 'path', { class: 'rib-fill', d, 'stroke-width': width > 14 ? 5 : 2 });
}

// Scattering chart: axes from 208 to 2644 Hz and 0 to 1.
const chart = document.getElementById('chart');
const left = 71.5, right = 733.5, top0 = 64.5, bottom = 343.5;
const px = hz => Math.round(left + (hz - 208) * 0.2718) + 0.5;
const py = v => Math.round(bottom - v * 279) + 0.5;
let ticks = `M${left} ${top0}H${right}V${bottom}H${left}z`;
for (let i = 0; i <= 50; i++) {
  const y = py(i / 50) - 1, major = i % 5 === 0;
  ticks += `M${left - (major ? 5 : 2)} ${y}h${major ? 12 : 6}M${right} ${y}h${major ? -6 : -3}`;
  if (major) add(chart, 'text', { class: 'ylabel', x: 58, y: y + 4 }, (i / 50).toFixed(1));
}
for (let hz = 300; hz <= 2600; hz += 100) {
  const x = px(hz) - 1, major = hz % 500 === 0;
  ticks += `M${x} ${bottom - (major ? 6 : 3)}v${major ? 12 : 7}M${x} ${top0}v${major ? 6 : 3}`;
  if (major) add(chart, 'text', { x, y: 367 }, String(hz));
}
add(chart, 'path', { class: 'line', d: ticks });
const values = [.458,.33,.425,.345,.258,.445,.415,.402,.4,.5,.385,.443,.34,.3,.467,.29,.318,.342,.36,.41,.51,.618,.48,.697,.697,.793,.755,.66,.76,.7,.738,.832,.735,.802,.81,.787,.907,.863,.863,.907,.882,.907,.86,.993,.922,.95,.938,.917,.955,.972,.99,.978,.985,.943,.985,1,.997,.964,.99,.99,.982,.972,.993,1,.986,.982,.99,.95,.982,.986,.982,1,1,.994,.996,1,1,.99,1,.996,.983,.985,.987,1,.996,.98,.978,.978,.984];
let line = `M${left} ${py(.44)}`;
values.forEach((v, i) => { line += `L${px(221 + i * 27.5)} ${py(v) - 1}`; });
add(chart, 'path', { class: 'series', d: line });
```
